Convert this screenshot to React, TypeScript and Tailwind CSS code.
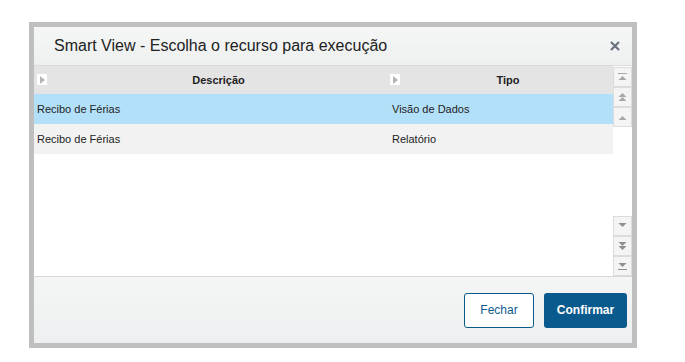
import React from "react";

const rows = [
    { desc: "Recibo de Férias", tipo: "Visão de Dados", selected: true },
    { desc: "Recibo de Férias", tipo: "Relatório", selected: false },
];

function SortIcon() {
    return (
        <span className="flex h-[11px] w-[10px] items-center justify-center bg-white">
            <svg width="5" height="8" viewBox="0 0 5 8">
                <path d="M0 0 L5 4 L0 8 Z" fill="#b5b5b5" />
            </svg>
        </span>
    );
}

function ScrollBtn({ kind }: { kind: "first" | "pageUp" | "up" | "down" | "pageDown" | "last" }) {
    const up = kind === "first" || kind === "pageUp" || kind === "up";
    return (
        <div className="flex h-[20px] w-[19px] items-center justify-center border border-[#dcdcdc] bg-[#f4f4f4]">
            <svg width="9" height="10" viewBox="0 0 9 10">
                {up ? (
                    <>
                        {kind === "first" && <rect x="0" y="1" width="9" height="1" fill="#a8a8a8" />}
                        {kind === "pageUp" && <path d="M0.5 5 L4.5 1 L8.5 5 Z" fill="#a8a8a8" />}
                        <path d={kind === "pageUp" ? "M0.5 9 L4.5 5 L8.5 9 Z" : "M0.5 8 L4.5 4 L8.5 8 Z"} fill="#a8a8a8" />
                    </>
                ) : (
                    <>
                        <path d={kind === "pageDown" ? "M0.5 1 L4.5 5 L8.5 1 Z" : "M0.5 2 L4.5 6 L8.5 2 Z"} fill="#8f8f8f" />
                        {kind === "pageDown" && <path d="M0.5 5 L4.5 9 L8.5 5 Z" fill="#8f8f8f" />}
                        {kind === "last" && <rect x="0" y="8" width="9" height="1" fill="#8f8f8f" />}
                    </>
                )}
            </svg>
        </div>
    );
}

export default function App() {
    return (
        <div className="h-[362px] w-[685px] bg-white pl-[29px] pt-[22px]" style={{ fontFamily: '"Liberation Sans", Arial, sans-serif' }}>
            <div className="flex h-[326px] w-[608px] flex-col border-[5px] border-[#bfbfbf] bg-white">
                <div className="flex h-[39px] items-center justify-between border-b border-[#dadada] bg-gradient-to-b from-[#f5f6f6] to-[#eef0f0] pl-[20px] pr-[10px]">
                    <span className="text-[16px] text-[#222]">Smart View - Escolha o recurso para execução</span>
                    <svg width="10" height="10" viewBox="0 0 10 10" className="mr-[2px]">
                        <path d="M1 1 L9 9 M9 1 L1 9" stroke="#6b7380" strokeWidth="2.2" />
                    </svg>
                </div>
                <div className="flex flex-1">
                    <div className="flex-1">
                        <div className="flex h-[28px] items-center bg-[#e4e4e4] text-[11px] font-bold text-[#222]">
                            <div className="relative flex h-full w-[353px] items-center justify-center pl-[16px]">
                                <span className="absolute left-[3px] top-[8px]"><SortIcon /></span>
                                Descrição
                            </div>
                            <div className="relative flex h-full flex-1 items-center justify-center pl-[16px]">
                                <span className="absolute left-[3px] top-[8px]"><SortIcon /></span>
                                Tipo
                            </div>
                        </div>
                        {rows.map((r, i) => (
                            <div key={i} className={`flex h-[30px] items-center text-[11px] text-[#222] ${r.selected ? "bg-[#b3e0f9]" : "bg-[#f2f2f2]"}`}>
                                <div className="w-[353px] pl-[3px]">{r.desc}</div>
                                <div className="flex-1 pl-[5px]">{r.tipo}</div>
                            </div>
                        ))}
                    </div>
                    <div className="flex w-[19px] flex-col justify-between bg-white pt-[1px]">
                        <div className="flex flex-col">
                            <ScrollBtn kind="first" />
                            <ScrollBtn kind="pageUp" />
                            <ScrollBtn kind="up" />
                        </div>
                        <div className="flex flex-col">
                            <ScrollBtn kind="down" />
                            <ScrollBtn kind="pageDown" />
                            <ScrollBtn kind="last" />
                        </div>
                    </div>
                </div>
                <div className="flex h-[67px] items-center justify-end gap-[10px] border-t border-[#d6d6d6] bg-gradient-to-b from-[#f4f5f5] to-[#eeeff0] pr-[5px]">
                    <button className="h-[35px] w-[70px] rounded-[3px] border border-[#0c5a8c] bg-white text-[12px] text-[#0c5a8c]">Fechar</button>
                    <button className="h-[35px] w-[83px] rounded-[3px] bg-[#0b5a8e] text-[12px] font-bold text-white">Confirmar</button>
                </div>
            </div>
        </div>
    );
}
